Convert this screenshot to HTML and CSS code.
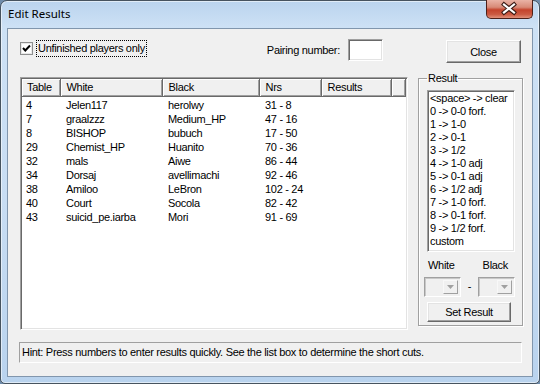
FILE: index.html
```html
<!DOCTYPE html>
<html lang="en">
<head>
    <meta charset="UTF-8">
    <title>Edit Results</title>
    <link rel="stylesheet" href="styles.css">
</head>
<body>
    <div class="window">
        <div class="titlebar">
            <span class="title">Edit Results</span>
            <span class="close-x">
                <svg width="47" height="19" viewBox="0 0 47 19">
                    <path d="M18 5.5 L28 13.5 M28 5.5 L18 13.5" stroke="#3b1a14" stroke-width="4.2" stroke-linecap="square"/>
                    <path d="M18 5.5 L28 13.5 M28 5.5 L18 13.5" stroke="#fff" stroke-width="2.2" stroke-linecap="square"/>
                </svg>
            </span>
        </div>
        <div class="client">
            <div class="top-row">
                <label class="check">
                    <span class="box">
                        <svg width="11" height="11" viewBox="0 0 11 11">
                            <path d="M2 5 L4.3 7.5 L9 2.5" fill="none" stroke="#000" stroke-width="2"/>
                        </svg>
                    </span>
                    <span class="focus">Unfinished players only</span>
                </label>
                <div class="pairing">
                    <span class="pairing-label">Pairing number:</span>
                    <span class="edit"></span>
                </div>
                <button class="btn close-btn">Close</button>
            </div>
            <div class="main-row">
                <div class="listview">
                    <table>
                        <colgroup>
                            <col class="c-table"><col class="c-white"><col class="c-black"><col class="c-nrs"><col class="c-res"><col>
                        </colgroup>
                        <thead>
                            <tr><th class="first">Table</th><th>White</th><th>Black</th><th>Nrs</th><th>Results</th><th></th></tr>
                        </thead>
                        <tbody>
                            <tr><td class="first">4</td><td>Jelen117</td><td>herolwy</td><td>31 - 8</td><td></td><td></td></tr>
                            <tr><td class="first">7</td><td>graalzzz</td><td>Medium_HP</td><td>47 - 16</td><td></td><td></td></tr>
                            <tr><td class="first">8</td><td>BISHOP</td><td>bubuch</td><td>17 - 50</td><td></td><td></td></tr>
                            <tr><td class="first">29</td><td>Chemist_HP</td><td>Huanito</td><td>70 - 36</td><td></td><td></td></tr>
                            <tr><td class="first">32</td><td>mals</td><td>Aiwe</td><td>86 - 44</td><td></td><td></td></tr>
                            <tr><td class="first">34</td><td>Dorsaj</td><td>avellimachi</td><td>92 - 46</td><td></td><td></td></tr>
                            <tr><td class="first">38</td><td>Amiloo</td><td>LeBron</td><td>102 - 24</td><td></td><td></td></tr>
                            <tr><td class="first">40</td><td>Court</td><td>Socola</td><td>82 - 42</td><td></td><td></td></tr>
                            <tr><td class="first">43</td><td>suicid_pe.iarba</td><td>Mori</td><td>91 - 69</td><td></td><td></td></tr>
                        </tbody>
                    </table>
                </div>
                <fieldset class="result">
                    <legend>Result</legend>
                    <ul class="listbox">
                        <li>&lt;space&gt; -&gt; clear</li>
                        <li>0 -&gt; 0-0 forf.</li>
                        <li>1 -&gt; 1-0</li>
                        <li>2 -&gt; 0-1</li>
                        <li>3 -&gt; 1/2</li>
                        <li>4 -&gt; 1-0 adj</li>
                        <li>5 -&gt; 0-1 adj</li>
                        <li>6 -&gt; 1/2 adj</li>
                        <li>7 -&gt; 1-0 forf.</li>
                        <li>8 -&gt; 0-1 forf.</li>
                        <li>9 -&gt; 1/2 forf.</li>
                        <li>custom</li>
                    </ul>
                    <div class="side-labels"><span>White</span><span>Black</span></div>
                    <div class="combos">
                        <span class="combo"><span class="drop"><svg width="7" height="4" viewBox="0 0 7 4"><path d="M0 0 H7 L3.5 4 Z" fill="#a0a0a0"/></svg></span></span>
                        <span class="dash">-</span>
                        <span class="combo"><span class="drop"><svg width="7" height="4" viewBox="0 0 7 4"><path d="M0 0 H7 L3.5 4 Z" fill="#a0a0a0"/></svg></span></span>
                    </div>
                    <button class="btn set-btn">Set Result</button>
                </fieldset>
            </div>
            <div class="hint">Hint: Press numbers to enter results quickly. See the list box to determine the short cuts.</div>
        </div>
    </div>
</body>
</html>
```

FILE: styles.css
```css
*{
    margin:0;
    padding:0;
    box-sizing:border-box;
}
body{
    width:540px;
    height:384px;
    overflow:hidden;
    background:#6f8cab;
    font-family:"Liberation Sans", Arial, sans-serif;
    font-size:11px;
    letter-spacing:-0.3px;
    color:#000;
}
.window{
    display:flex;
    flex-direction:column;
    width:540px;
    height:384px;
    padding:0 6px 6px 6px;
    border:1px solid #46535f;
    border-radius:7px 7px 5px 5px;
    background:linear-gradient(to bottom, #bad4ee 0, #cde1f5 26px, #c8ddf3 200px, #b9d3ee 100%);
    box-shadow:inset 0 0 0 1px rgba(255,255,255,0.55);
}
.titlebar{
    display:flex;
    justify-content:space-between;
    align-items:flex-start;
    height:27px;
}
.title{
    margin:5px 0 0 1px;
    font-family:"Noto Sans", sans-serif;
    font-size:11.5px;
    letter-spacing:0;
    color:#000;
}
.close-x{
    display:block;
    width:47px;
    height:19px;
    margin:-1px 0 0 0;
    border:1px solid #4d2019;
    border-top:none;
    border-radius:0 0 5px 5px;
    background:linear-gradient(to bottom, #eab3a6 0, #d88a77 40%, #c4432c 55%, #cb5a42 80%, #e1907a 100%);
}
.close-x svg{
    display:block;
    margin:-1px 0 0 -1px;
}
.client{
    flex:1;
    background:#f0f0f0;
    border:1px solid #8196ad;
}

/* top row */
.top-row{
    display:flex;
    align-items:flex-start;
    height:42px;
    padding:11px 11px 0 12px;
}
.check{
    display:flex;
    align-items:center;
    height:17px;
}
.box{
    display:flex;
    align-items:center;
    justify-content:center;
    width:13px;
    height:13px;
    border:1px solid #8e8f8f;
    background:#fff;
    box-shadow:inset 0 0 0 1px #e8e8e8;
}
.focus{
    margin-left:3px;
    padding:0 1px;
    line-height:15px;
    border:1px dotted #000;
}
.pairing{
    display:flex;
    align-items:flex-start;
    margin-left:auto;
}
.pairing-label{
    margin-top:4px;
    line-height:13px;
}
.edit{
    width:35px;
    height:22px;
    margin-left:8px;
    margin-top:-1px;
    background:#fff;
    border:1px solid;
    border-color:#a0a0a0 #fff #fff #a0a0a0;
    box-shadow:inset 1px 1px 0 #696969, inset -1px -1px 0 #e3e3e3;
}
.btn{
    font-family:"Liberation Sans", Arial, sans-serif;
    font-size:11px;
    letter-spacing:-0.3px;
    color:#000;
    background:#f0f0f0;
    border:1px solid;
    border-color:#fff #696969 #696969 #fff;
    box-shadow:inset -1px -1px 0 #a0a0a0, inset 1px 1px 0 #e3e3e3;
}
.close-btn{
    width:75px;
    height:23px;
    margin-left:63px;
    margin-top:0;
}

/* main row */
.main-row{
    display:flex;
    align-items:flex-start;
    height:259px;
    padding-left:12px;
}
.listview{
    width:388px;
    height:253px;
    margin-top:6px;
    background:#fff;
    border:1px solid;
    border-color:#a0a0a0 #fff #fff #a0a0a0;
    box-shadow:inset 1px 1px 0 #696969, inset -1px -1px 0 #e3e3e3;
    padding:1px;
    overflow:hidden;
}
table{
    width:384px;
    table-layout:fixed;
    border-collapse:collapse;
}
.c-table{ width:38px; }
.c-white{ width:102px; }
.c-black{ width:97px; }
.c-nrs{ width:62px; }
.c-res{ width:70px; }
th{
    height:17px;
    padding:0 0 1px 6px;
    font-weight:normal;
    text-align:left;
    background:#f0f0f0;
    border-right:1px solid #696969;
    border-bottom:1px solid #696969;
    box-shadow:inset 1px 1px 0 #fff, inset -1px -1px 0 #a0a0a0;
    white-space:nowrap;
}
th.first{ padding-left:5px; }
td{
    height:14px;
    line-height:14px;
    padding:0 0 0 6px;
    white-space:nowrap;
    overflow:hidden;
}
td.first{ padding-left:4px; }
tbody tr:first-child td{
    padding-top:1px;
    height:15px;
}

/* result group */
.result{
    width:105px;
    height:255px;
    margin-left:10px;
    padding:0 7px 0 8px;
    border:1px solid #a0a0a0;
    box-shadow:1px 1px 0 #fff, inset 1px 1px 0 #fff;
}
.result legend{
    margin-left:0;
    padding:0 1px;
    line-height:14px;
}
.listbox{
    list-style:none;
    width:88px;
    height:162px;
    margin-top:5px;
    padding:1px 0 0 2px;
    background:#fff;
    border:1px solid;
    border-color:#a0a0a0 #fff #fff #a0a0a0;
    box-shadow:inset 1px 1px 0 #696969, inset -1px -1px 0 #e3e3e3;
}
.listbox li{
    line-height:13px;
    white-space:nowrap;
}
.side-labels{
    display:flex;
    justify-content:space-between;
    margin-top:7px;
    padding:0 7px 0 1px;
    line-height:13px;
}
.combos{
    display:flex;
    align-items:center;
    justify-content:space-between;
    width:91px;
    margin:5px 0 0 -3px;
}
.combo{
    display:flex;
    justify-content:flex-end;
    width:37px;
    height:20px;
    background:#f0f0f0;
    border:1px solid;
    border-color:#a0a0a0 #fff #fff #a0a0a0;
    box-shadow:inset 1px 1px 0 #c8c8c8;
    padding:2px;
}
.drop{
    display:flex;
    align-items:center;
    justify-content:center;
    width:15px;
    height:14px;
    border:1px solid;
    border-color:#f8f8f8 #a0a0a0 #a0a0a0 #f8f8f8;
}
.dash{
    line-height:13px;
    margin-top:-2px;
}
.set-btn{
    display:block;
    width:84px;
    height:20px;
    margin-top:5px;
}

/* hint */
.hint{
    width:503px;
    height:21px;
    margin:12px 0 0 11px;
    padding-left:2px;
    line-height:19px;
    border:1px solid;
    border-color:#a0a0a0 #fff #fff #a0a0a0;
    white-space:nowrap;
    overflow:hidden;
}
```
